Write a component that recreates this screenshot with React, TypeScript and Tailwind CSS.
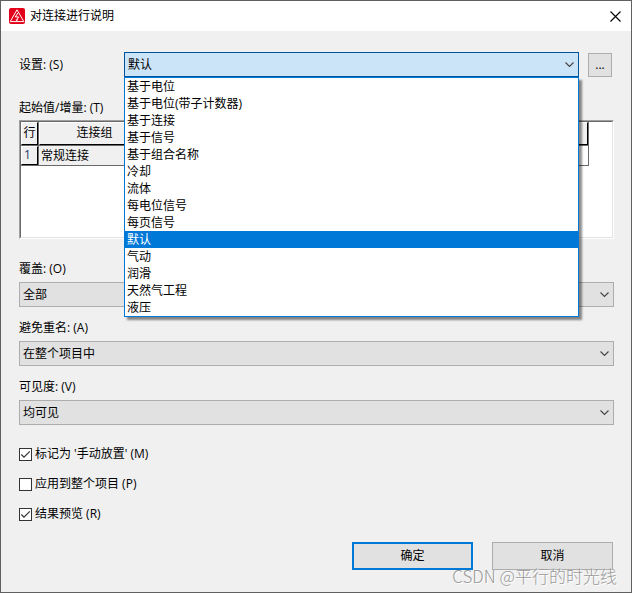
import React, { useState } from 'react';

const SCHEMES = [
  '基于电位',
  '基于电位(带子计数器)',
  '基于连接',
  '基于信号',
  '基于组合名称',
  '冷却',
  '流体',
  '每电位信号',
  '每页信号',
  '默认',
  '气动',
  '润滑',
  '天然气工程',
  '液压',
];

const Chevron: React.FC = () => (
  <svg className="absolute right-[5px] top-2 w-[9px] h-[9px] pointer-events-none" viewBox="0 0 9 9" fill="none" stroke="#444444" strokeWidth="1.1">
    <path d="M0.5 2.5 L4.5 6.5 L8.5 2.5" />
  </svg>
);

const AppIcon: React.FC = () => (
  <svg className="w-4 h-4 shrink-0" viewBox="0 0 16 16" fill="none">
    <rect width="16" height="16" rx="2" fill="#e2001a" />
    <path d="M8 1.8 L14.8 13.6 H1.2 Z" stroke="#ffffff" strokeWidth="1" strokeLinejoin="round" />
    <path d="M8.8 5 L6.3 8.9 H9.5 L7.6 12.6" stroke="#ffffff" strokeWidth="1" />
    <path d="M7.2 10.8 L7.4 12.8 L9 11.8" stroke="#ffffff" strokeWidth="0.6" />
  </svg>
);

interface SelectFieldProps {
  id: string;
  label: string;
  options: string[];
}

const SelectField: React.FC<SelectFieldProps> = ({ id, label, options }) => (
  <div className="flex flex-col gap-[5px]">
    <label htmlFor={id} className="h-4 leading-4">{label}</label>
    <div className="relative">
      <select id={id} className="appearance-none block w-full h-[25px] pl-[3px] pr-5 leading-4 bg-[#e1e1e1] border border-[#adadad] outline-none">
        {options.map((o) => <option key={o}>{o}</option>)}
      </select>
      <Chevron />
    </div>
  </div>
);

interface CheckFieldProps {
  label: string;
  initial?: boolean;
}

const CheckField: React.FC<CheckFieldProps> = ({ label, initial = false }) => {
  const [checked, setChecked] = useState(initial);
  return (
    <label className="flex items-center gap-[3px] h-4 leading-4">
      <span className="relative w-[13px] h-[13px]">
        <input
          type="checkbox"
          checked={checked}
          onChange={(e) => setChecked(e.target.checked)}
          className="appearance-none block w-[13px] h-[13px] bg-white border border-[#333333]"
        />
        {checked && (
          <svg className="absolute inset-0 w-[13px] h-[13px] pointer-events-none" viewBox="0 0 13 13" fill="none" stroke="#333333" strokeWidth="1.2">
            <path d="M2.3 6.5 L5 9.2 L10.8 3.4" />
          </svg>
        )}
      </span>
      {label}
    </label>
  );
};

export default function App() {
  const [scheme, setScheme] = useState('默认');

  return (
    <div className="relative min-h-screen flex flex-col bg-[#f0f0f0] border border-[#606060] text-black text-[12px] font-['Open_Sans','Noto_Sans_CJK_SC',sans-serif]">
      {/* Title bar */}
      <header className="h-[30px] bg-white flex items-center gap-[5px] pl-2 pr-[10px]">
        <AppIcon />
        <h1 className="flex-1 leading-4">对连接进行说明</h1>
        <button aria-label="关闭" className="w-[11px] h-[11px]">
          <svg className="block w-[11px] h-[11px]" viewBox="0 0 11 11" fill="none" stroke="#000000" strokeWidth="1.1">
            <path d="M0.5 0.5 L10.5 10.5 M10.5 0.5 L0.5 10.5" />
          </svg>
        </button>
      </header>

      <main className="flex flex-col pl-[18px] pr-[17px] pt-[21px]">
        {/* Scheme */}
        <div className="flex items-center pr-0.5">
          <label htmlFor="scheme" className="w-[105px] shrink-0 leading-4">设置: (S)</label>
          <div className="relative flex-1">
            <select
              id="scheme"
              value={scheme}
              onChange={(e) => setScheme(e.target.value)}
              className="appearance-none block w-full h-[25px] pl-[3px] pr-5 leading-4 bg-[#cce4f7] border border-[#005499] outline-none"
            >
              {SCHEMES.map((s) => <option key={s}>{s}</option>)}
            </select>
            <Chevron />
            <ul role="listbox" className="absolute z-10 top-full inset-x-0 bg-white border border-[#0078d7] shadow-[3px_3px_2px_rgba(0,0,0,0.45)]">
              {SCHEMES.map((s) => (
                <li
                  key={s}
                  role="option"
                  aria-selected={s === scheme}
                  onClick={() => setScheme(s)}
                  className="h-[17px] leading-[17px] pl-0.5 cursor-default aria-selected:bg-[#0078d7] aria-selected:text-white"
                >
                  {s}
                </li>
              ))}
            </ul>
          </div>
          <button className="ml-[9px] w-6 h-6 leading-4 bg-[#e1e1e1] border border-[#adadad]">...</button>
        </div>

        {/* Start value / increment */}
        <h2 id="start-values" className="mt-[23px] h-4 leading-4">起始值/增量: (T)</h2>
        <div className="mt-1 border border-t-[#a0a0a0] border-l-[#a0a0a0] border-r-white border-b-white">
          <div className="h-[117px] pr-[23px] bg-white border border-t-[#696969] border-l-[#696969] border-r-[#e3e3e3] border-b-[#e3e3e3]">
            <table aria-labelledby="start-values" className="w-full table-fixed border-separate border-spacing-0">
              <colgroup>
                <col className="w-[18px]" />
                <col className="w-28" />
                <col />
              </colgroup>
              <thead>
                <tr>
                  <th className="p-0 font-normal border-r border-b border-[#696969]">
                    <div className="h-[23px] leading-5 bg-[#f0f0f0] border border-t-white border-l-white border-r-black border-b-black">行</div>
                  </th>
                  <th className="p-0 font-normal border-r border-b border-[#696969]">
                    <div className="h-[23px] leading-5 bg-[#f0f0f0] border border-t-white border-l-white border-r-black border-b-black">连接组</div>
                  </th>
                  <th className="p-0 font-normal border-r border-b border-[#696969]">
                    <div className="h-[23px] bg-[#f0f0f0] border border-t-white border-l-white border-r-black border-b-black" />
                  </th>
                </tr>
              </thead>
              <tbody>
                <tr>
                  <th className="p-0 font-normal text-left text-[#1f3864] border-r border-b border-[#696969]">
                    <div className="h-[19px] pl-0.5 leading-4 bg-[#f0f0f0] border border-t-white border-l-white border-r-black border-b-black">1</div>
                  </th>
                  <td className="p-0 pl-0.5 leading-4 bg-[#f0f0f0] border-r border-b border-[#696969]">常规连接</td>
                  <td className="p-0 border-r border-b border-[#696969]" />
                </tr>
              </tbody>
            </table>
          </div>
        </div>

        <div className="mt-[22px] flex flex-col gap-[13px]">
          <SelectField id="overwrite" label="覆盖: (O)" options={['全部']} />
          <SelectField id="duplicates" label="避免重名: (A)" options={['在整个项目中']} />
          <SelectField id="visibility" label="可见度: (V)" options={['均可见']} />
        </div>

        <div className="mt-[21px] flex flex-col gap-[14px]">
          <CheckField label="标记为 '手动放置' (M)" initial />
          <CheckField label="应用到整个项目 (P)" />
          <CheckField label="结果预览 (R)" initial />
        </div>

        {/* Actions */}
        <div className="mt-5 flex justify-end gap-[19px] pr-px">
          <button className="w-[121px] h-7 leading-4 bg-[#e1e1e1] border-2 border-[#0078d7]">确定</button>
          <button className="w-[121px] h-7 leading-4 bg-[#e1e1e1] border border-[#adadad]">取消</button>
        </div>
      </main>

      <p className="absolute right-[14px] bottom-1 text-[17px] leading-6 text-[#9a9a9a] [text-shadow:1px_1px_0_#ffffff] font-['Noto_Sans_CJK_SC',sans-serif] font-light pointer-events-none">
        CSDN @平行的时光线
      </p>
    </div>
  );
}
